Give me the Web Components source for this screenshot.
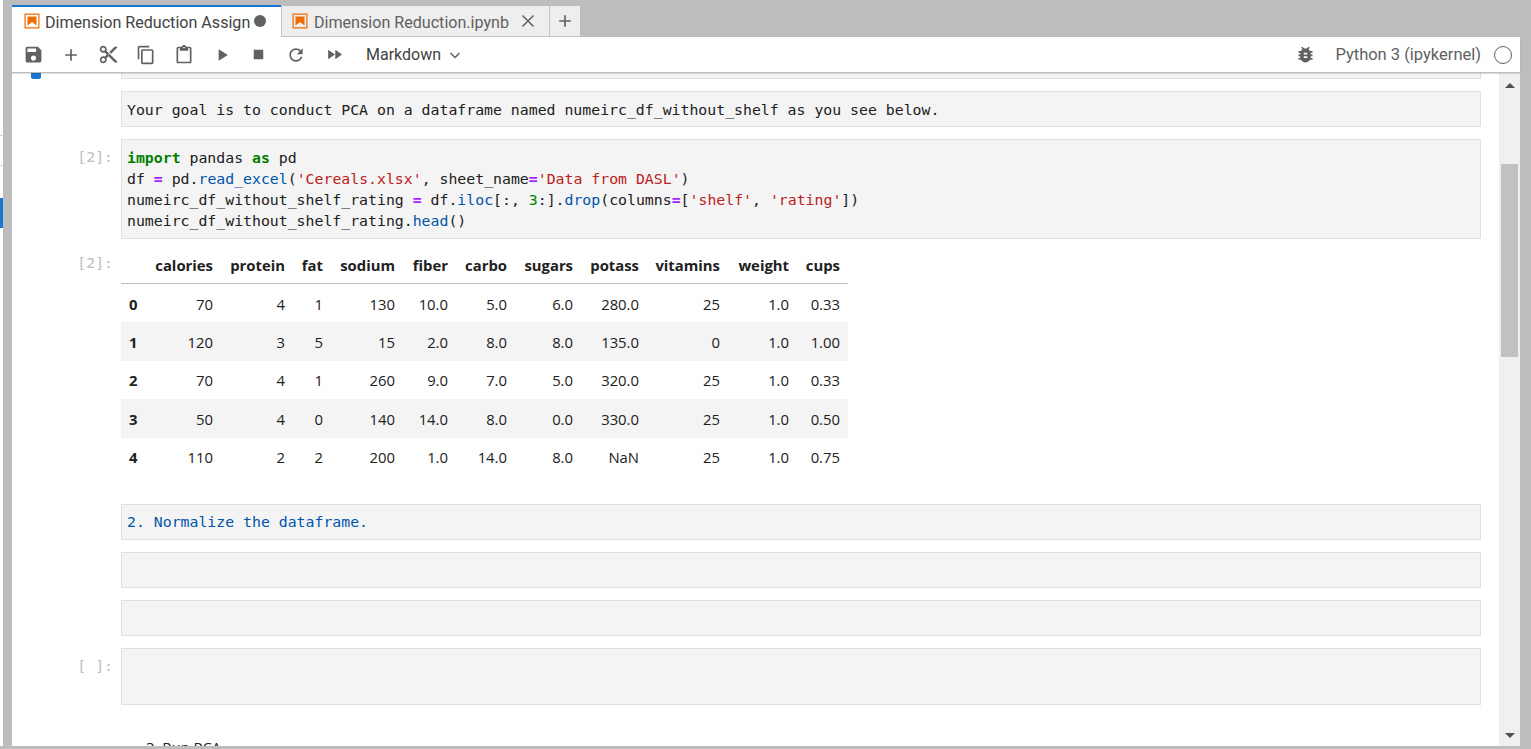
<!DOCTYPE html>
<html>
<head>
<meta charset="utf-8">
<title>Dimension Reduction</title>
<style>
  html, body { margin: 0; height: 100%; overflow: hidden; background: #bdbdbd; }
</style>
</head>
<body>
<lab-shell>
  <lab-tab slot="tabs" active dirty>Dimension Reduction Assign</lab-tab>
  <lab-tab slot="tabs" closable>Dimension Reduction.ipynb</lab-tab>
  <nb-toolbar slot="toolbar"></nb-toolbar>
  <nb-cell slot="cells" kind="stub"></nb-cell>
  <nb-cell slot="cells" kind="text" style="margin-top:12px">Your goal is to conduct PCA on a dataframe named numeirc_df_without_shelf as you see below.</nb-cell>
  <nb-cell slot="cells" kind="code" prompt="[2]:" style="margin-top:12px"><b class="k">import</b> pandas <b class="k">as</b> pd
df <b class="o">=</b> pd.<span class="f">read_excel</span>(<span class="s">'Cereals.xlsx'</span>, sheet_name<b class="o">=</b><span class="s">'Data from DASL'</span>)
numeirc_df_without_shelf_rating <b class="o">=</b> df.<span class="f">iloc</span>[:, <span class="n">3</span>:].<span class="f">drop</span>(columns<b class="o">=</b>[<span class="s">'shelf'</span>, <span class="s">'rating'</span>])
numeirc_df_without_shelf_rating.<span class="f">head</span>()</nb-cell>
  <nb-output slot="cells" prompt="[2]:"><df-table></df-table></nb-output>
  <nb-cell slot="cells" kind="text" tone="md" style="margin-top:28px">2. Normalize the dataframe.</nb-cell>
  <nb-cell slot="cells" kind="text" style="margin-top:12px"></nb-cell>
  <nb-cell slot="cells" kind="text" style="margin-top:12px"></nb-cell>
  <nb-cell slot="cells" kind="code" prompt="[ ]:" tall style="margin-top:12px"></nb-cell>
  <nb-heading slot="cells">3. Run PCA</nb-heading>
</lab-shell>

<script>
const ICONS = {
  save: 'M17 3H5c-1.11 0-2 .9-2 2v14c0 1.1.89 2 2 2h14c1.1 0 2-.9 2-2V7l-4-4zm-5 16c-1.66 0-3-1.34-3-3s1.34-3 3-3 3 1.34 3 3-1.34 3-3 3zm3-10H5V5h10v4z',
  add: 'M19 13h-6v6h-2v-6H5v-2h6V5h2v6h6v2z',
  cut: 'M9.64 7.64c.23-.5.36-1.05.36-1.64 0-2.21-1.79-4-4-4S2 3.79 2 6s1.79 4 4 4c.59 0 1.14-.13 1.64-.36L10 12l-2.36 2.36C7.14 14.13 6.59 14 6 14c-2.21 0-4 1.79-4 4s1.79 4 4 4 4-1.79 4-4c0-.59-.13-1.14-.36-1.64L12 14l7 7h3v-1L9.64 7.64zM6 8c-1.1 0-2-.89-2-2s.9-2 2-2 2 .89 2 2-.9 2-2 2zm0 12c-1.1 0-2-.89-2-2s.9-2 2-2 2 .89 2 2-.9 2-2 2zm6-7.5c-.28 0-.5-.22-.5-.5s.22-.5.5-.5.5.22.5.5-.22.5-.5.5zM19 3l-6 6 2 2 7-7V3z',
  copy: 'M16 1H4c-1.1 0-2 .9-2 2v14h2V3h12V1zm3 4H8c-1.1 0-2 .9-2 2v14c0 1.1.9 2 2 2h11c1.1 0 2-.9 2-2V7c0-1.1-.9-2-2-2zm0 16H8V7h11v14z',
  paste: 'M19 2h-4.18C14.4.84 13.3 0 12 0c-1.3 0-2.4.84-2.82 2H5c-1.1 0-2 .9-2 2v16c0 1.1.9 2 2 2h14c1.1 0 2-.9 2-2V4c0-1.1-.9-2-2-2zm-7 0c.55 0 1 .45 1 1s-.45 1-1 1-1-.45-1-1 .45-1 1-1zm7 18H5V4h2v3h10V4h2v16z',
  run: 'M8 5v14l11-7z',
  stop: 'M6 6h12v12H6z',
  refresh: 'M17.65 6.35C16.2 4.9 14.21 4 12 4c-4.42 0-7.99 3.58-7.99 8s3.57 8 7.99 8c3.73 0 6.84-2.55 7.73-6h-2.08c-.82 2.33-3.04 4-5.65 4-3.31 0-6-2.69-6-6s2.69-6 6-6c1.66 0 3.14.69 4.22 1.78L13 11h7V4l-2.35 2.35z',
  ff: 'M4 18l8.5-6L4 6v12zm9-12v12l8.5-6L13 6z',
  bug: 'M20 8h-2.81c-.45-.78-1.07-1.45-1.82-1.96L17 4.41 15.59 3l-2.17 2.17C12.96 5.06 12.49 5 12 5c-.49 0-.96.06-1.41.17L8.41 3 7 4.41l1.62 1.63C7.88 6.55 7.26 7.22 6.81 8H4v2h2.09c-.05.33-.09.66-.09 1v1H4v2h2v1c0 .34.04.67.09 1H4v2h2.81c1.04 1.79 2.97 3 5.19 3s4.15-1.21 5.19-3H20v-2h-2.09c.05-.33.09-.66.09-1v-1h2v-2h-2v-1c0-.34-.04-.67-.09-1H20V8zm-6 8h-4v-2h4v2zm0-4h-4v-2h4v2z'
};
const svg = (name, size) => `<svg width="${size}" height="${size}" viewBox="0 0 24 24" fill="#616161"><path d="${ICONS[name]}"/></svg>`;
const UI_FONT = `Roboto, "Liberation Sans", sans-serif`;
const MONO_FONT = `"DejaVu Sans Mono", "Liberation Mono", monospace`;
const TABLE_FONT = `"Open Sans", "Noto Sans", sans-serif`;

// ── Page frame ──
class LabShell extends HTMLElement {
  constructor() {
    super();
    this.attachShadow({ mode: "open" }).innerHTML = `
      <style>
        :host { display: flex; height: 749px; box-sizing: border-box; padding: 0 11px 3px 0; font-family: ${UI_FONT}; }
        .rail { width: 3px; margin-right: 9px; background: #fff; display: flex; flex-direction: column; padding-top: 135px; box-sizing: border-box; }
        .rail i { display: block; height: 1px; background: #d5d5d5; margin-bottom: 29px; }
        .rail b { display: block; height: 30px; margin-top: 3px; background: #1976d2; }
        .main { flex: 1; min-width: 0; display: flex; flex-direction: column; }
        .tabs { display: flex; height: 37px; padding-top: 5px; box-sizing: border-box; flex: none; }
        .plus { width: 31px; height: 31px; margin-top: 1px; background: #eeeeee; border-left: 1px solid #c4c4c4; border-bottom: 1px solid #c4c4c4; box-sizing: border-box; display: flex; align-items: center; justify-content: center; }
        .body { flex: 1; min-height: 0; display: flex; background: #fff; }
        .scroll { flex: 1; min-width: 0; overflow: hidden; padding: 0 18px 0 19px; }
        .bar { width: 21px; flex: none; background: #f0f0f0; display: flex; flex-direction: column; align-items: center; box-sizing: border-box; padding: 10px 0 8px; }
        .thumb { width: 17px; height: 193px; margin: 76px 0 auto; background: #c1c1c1; }
        .up { border: 5px solid transparent; border-top: 0; border-bottom: 5px solid #505050; }
        .down { border: 5px solid transparent; border-bottom: 0; border-top: 5px solid #505050; }
      </style>
      <div class="rail"><i></i><i></i><b></b></div>
      <div class="main">
        <div class="tabs"><slot name="tabs"></slot><div class="plus">${svg("add", 20)}</div></div>
        <slot name="toolbar"></slot>
        <div class="body">
          <div class="scroll"><slot name="cells"></slot></div>
          <div class="bar"><div class="up"></div><div class="thumb"></div><div class="down"></div></div>
        </div>
      </div>`;
  }
}

// ── Document tab ──
class LabTab extends HTMLElement {
  constructor() {
    super();
    this.attachShadow({ mode: "open" }).innerHTML = `
      <style>
        :host { display: flex; align-items: center; box-sizing: border-box; height: 31px; margin-top: 1px; width: 268px; background: #eeeeee; border-left: 1px solid #c4c4c4; border-bottom: 1px solid #c4c4c4; padding: 2px 0 0 9px; color: #616161; font-size: 16.1px; }
        :host([active]) { height: 32px; margin-top: 0; border: 0; border-top: 2px solid #1976d2; background: #fff; width: 269px; padding: 0 0 0 10.5px; color: #424242; }
        svg.nb { flex: none; margin: -3px 5px 0 0; }
        :host([active]) svg.nb { margin-right: 4.5px; }
        .name { white-space: nowrap; }
        .dot { width: 12px; height: 12px; border-radius: 50%; background: #616161; margin: -2px 0 0 4px; }
        .x { margin: -2px 0 0 12px; display: flex; }
      </style>
      <svg class="nb" width="18" height="18" viewBox="0 0 22 22"><path fill="#ef6c00" d="M18.7 3.3v15.4H3.3V3.3h15.4m1.5-1.5H1.8v18.3h18.3l.1-18.3z"/><path fill="#ef6c00" d="M16.5 16.5l-5.4-4.3-5.6 4.3v-11h11z"/></svg>
      <span class="name"><slot></slot></span>
      ${this.hasAttribute("dirty") ? '<span class="dot"></span>' : ""}
      ${this.hasAttribute("closable") ? `<span class="x"><svg width="14" height="14" viewBox="0 0 14 14" stroke="#616161" stroke-width="1.5" fill="none"><path d="M1.5 1.5l11 11M12.5 1.5l-11 11"/></svg></span>` : ""}`;
  }
}

// ── Notebook toolbar ──
class NbToolbar extends HTMLElement {
  constructor() {
    super();
    const btn = (name, size, w) => `<span class="b" style="width:${w}px">${svg(name, size)}</span>`;
    this.attachShadow({ mode: "open" }).innerHTML = `
      <style>
        :host { display: flex; flex: none; align-items: center; height: 36px; box-sizing: border-box; background: #fff; border-bottom: 1px solid #bdbdbd; box-shadow: 0 1px 1px rgba(0,0,0,.12); padding-left: 2px; color: #424242; position: relative; z-index: 1; }
        .b { display: flex; justify-content: center; align-items: center; flex: none; }
        .type { display: flex; align-items: center; gap: 8px; font-size: 16px; margin-left: 13px; color: #424242; }
        .gap { flex: 1; }
        .kernel { font-size: 16.5px; color: #616161; margin-left: 19.5px; white-space: nowrap; }
        .status { width: 18px; height: 18px; border: 1.5px solid #616161; border-radius: 50%; margin: 0 8px 0 13px; box-sizing: border-box; flex: none; }
      </style>
      ${btn("save", 21, 38)}${btn("add", 20, 38)}${btn("cut", 21, 37)}${btn("copy", 20, 38)}${btn("paste", 20, 38)}${btn("run", 20, 37)}${btn("stop", 19, 37)}${btn("refresh", 20, 38)}${btn("ff", 19, 38)}
      <span class="type">Markdown <svg width="12" height="12" viewBox="0 0 12 12" fill="none" stroke="#616161" stroke-width="1.5"><path d="M1.5 4l4.5 4.5L10.5 4"/></svg></span>
      <span class="gap"></span>
      <span class="b">${svg("bug", 21)}</span>
      <span class="kernel">Python 3 (ipykernel)</span>
      <span class="status"></span>`;
  }
}

// ── Notebook cell ──
class NbCell extends HTMLElement {
  constructor() {
    super();
    const kind = this.getAttribute("kind");
    const prompt = this.getAttribute("prompt") || "";
    this.attachShadow({ mode: "open" }).innerHTML = `
      <style>
        :host { display: flex; position: relative; font-family: ${MONO_FONT}; font-size: 14.84px; line-height: 21px; color: #212121; }
        .prompt { width: 90px; flex: none; padding: 7px 8px 0 0; box-sizing: border-box; text-align: right; color: #bdbdbd; }
        .box { flex: 1; min-width: 0; box-sizing: border-box; background: #f4f4f4; border: 1px solid #e0e0e0; padding: 7px 5px 6px; white-space: pre; min-height: 36px; }
        :host([kind="code"]) .box { padding-bottom: 7px; }
        :host([kind="stub"]) { height: 6px; }
        :host([kind="stub"]) .box { min-height: 0; height: 6px; padding: 0; border-top: 0; }
        :host([tone="md"]) .box { color: #0055aa; padding: 6px 5px 7px; }
        :host([tall]) .box { min-height: 57px; }
        .mark { position: absolute; left: 0; top: 0; width: 10px; height: 6px; background: #1976d2; border-radius: 0 0 2px 2px; }
        ::slotted(.k) { color: #008000; font-weight: bold; }
        ::slotted(.o) { color: #aa22ff; font-weight: bold; }
        ::slotted(.s) { color: #ba2121; }
        ::slotted(.f) { color: #0055aa; }
        ::slotted(.n) { color: #008000; }
      </style>
      ${kind === "stub" ? '<span class="mark"></span>' : ""}
      <div class="prompt">${prompt}</div>
      <div class="box"><slot></slot></div>`;
  }
}

// ── Output area ──
class NbOutput extends HTMLElement {
  constructor() {
    super();
    this.attachShadow({ mode: "open" }).innerHTML = `
      <style>
        :host { display: flex; margin-top: 12px; font-family: ${MONO_FONT}; font-size: 14.84px; line-height: 21px; }
        .prompt { width: 90px; flex: none; padding: 1px 8px 0 0; box-sizing: border-box; text-align: right; color: #bdbdbd; }
      </style>
      <div class="prompt">${this.getAttribute("prompt")}</div>
      <slot></slot>`;
  }
}

// ── DataFrame table ──
const COLS = [["", 26], ["calories", 74], ["protein", 72], ["fat", 38], ["sodium", 72], ["fiber", 53], ["carbo", 59], ["sugars", 66], ["potass", 66], ["vitamins", 81], ["weight", 69], ["cups", 51]];
const ROWS = [
  ["0", "70", "4", "1", "130", "10.0", "5.0", "6.0", "280.0", "25", "1.0", "0.33"],
  ["1", "120", "3", "5", "15", "2.0", "8.0", "8.0", "135.0", "0", "1.0", "1.00"],
  ["2", "70", "4", "1", "260", "9.0", "7.0", "5.0", "320.0", "25", "1.0", "0.33"],
  ["3", "50", "4", "0", "140", "14.0", "8.0", "0.0", "330.0", "25", "1.0", "0.50"],
  ["4", "110", "2", "2", "200", "1.0", "14.0", "8.0", "NaN", "25", "1.0", "0.75"]
];
class DfTable extends HTMLElement {
  constructor() {
    super();
    const body = ROWS.map((r) => `<tr>${r.map((v, i) => i ? `<td>${v}</td>` : `<th>${v}</th>`).join("")}</tr>`).join("");
    this.attachShadow({ mode: "open" }).innerHTML = `
      <style>
        :host { display: block; font-family: ${TABLE_FONT}; font-size: 14.85px; color: #212121; }
        table { border-collapse: separate; border-spacing: 0; table-layout: fixed; width: 727px; }
        th, td { padding: 2px 8px 0; box-sizing: border-box; text-align: right; font-weight: normal; height: 38.4px; white-space: nowrap; }
        th { font-weight: bold; }
        thead th { height: 33px; padding: 0 8px 4px; border-bottom: 1px solid #bdbdbd; }
        tbody th { text-align: left; }
        tbody tr:nth-child(even) { background: #f4f4f4; }
      </style>
      <table>
        <colgroup>${COLS.map((c) => `<col style="width:${c[1]}px">`).join("")}</colgroup>
        <thead><tr>${COLS.map((c) => `<th>${c[0]}</th>`).join("")}</tr></thead>
        <tbody>${body}</tbody>
      </table>`;
  }
}

// ── Markdown heading cut by the bottom edge ──
class NbHeading extends HTMLElement {
  constructor() {
    super();
    this.attachShadow({ mode: "open" }).innerHTML = `
      <style>
        :host { display: block; margin: 32px 0 0 115px; font-family: ${TABLE_FONT}; font-size: 14.85px; line-height: 21px; color: #212121; }
      </style>
      <slot></slot>`;
  }
}

customElements.define("lab-shell", LabShell);
customElements.define("lab-tab", LabTab);
customElements.define("nb-toolbar", NbToolbar);
customElements.define("nb-cell", NbCell);
customElements.define("nb-output", NbOutput);
customElements.define("df-table", DfTable);
customElements.define("nb-heading", NbHeading);
</script>
</body>
</html>
